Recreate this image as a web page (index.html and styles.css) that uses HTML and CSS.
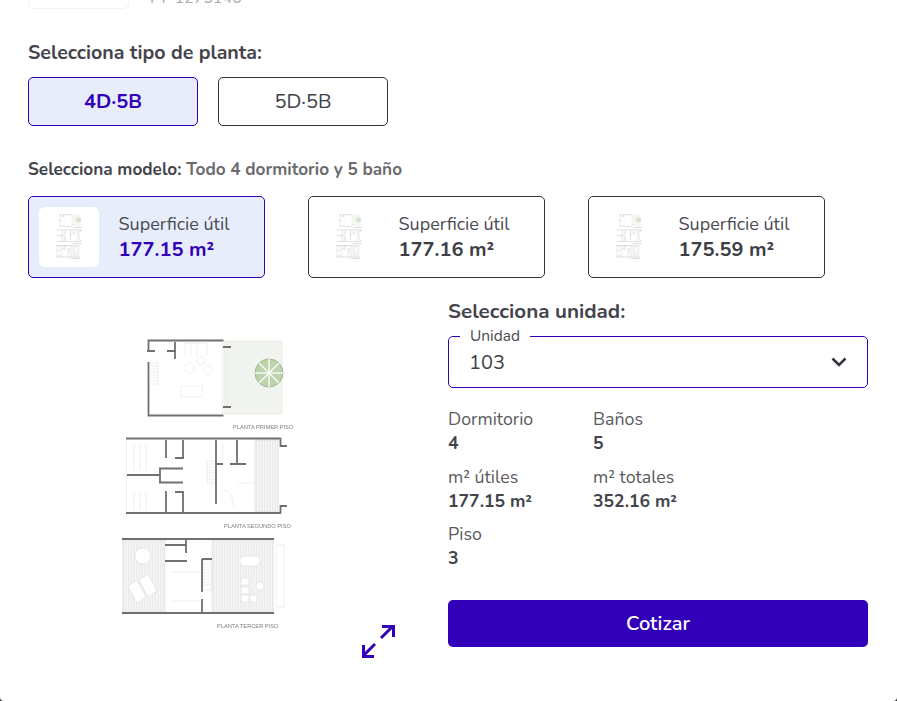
FILE: index.html
```html
<!DOCTYPE html>
<html lang="es">
<head>
<meta charset="utf-8">
<title>Selecciona planta</title>
<link rel="stylesheet" href="styles.css">
</head>
<body>
<svg class="defs" width="0" height="0" aria-hidden="true">
  <defs>
    <pattern id="stripes" width="1.600" height="4" patternUnits="userSpaceOnUse">
      <rect class="stripe-bg" width="1.600" height="4"/>
      <rect class="stripe" width=".7" height="4"/>
    </pattern>
  </defs>
  <symbol id="plan" class="plan-symbol" viewBox="112 330 190 308">
    <g class="thin">
      <rect class="terrace" x="224" y="341" width="58" height="73"/>
      <path d="M222.500 341V414M227 349V405"/>
      <path d="M150 363h8M150 366h8M150 369h8M150 372h8M150 375h8M150 378h8M150 381h8M150 384h8M158 362V386"/>
      <rect x="181" y="386" width="21" height="11"/>
      <path d="M185 343v13M191 343v13M197 343v13M185 343h22v13"/>
      <path d="M189 361l-6 7 6 7 6-7zM208 365l-5 5 5 5 5-5z"/>
      <circle cx="201" cy="361" r="4"/>
    </g>
    <g class="tree">
      <circle cx="269" cy="373" r="14"/>
      <path d="M269 359v28M255 373h28M259 363l20 20M279 363l-20 20"/>
    </g>
    <path class="wall" d="M148.500 352V340.500H223.500M148.500 362V415.500H223.500M147 351H155M167 351H176M175 342V359M223 347H231M223 407H231"/>
    <text class="cap" x="233" y="429">PLANTA PRIMER PISO</text>

    <g class="thin">
      <rect class="deck" x="255" y="440" width="23" height="72"/>
      <path d="M126.500 440V512M207 461h9v23h-9zM207 464h9M207 467h9M207 470h9M207 473h9M207 476h9M207 479h9M207 482h9"/>
      <path d="M134 444v26M140 444v26M146 444v26M134 492v18M140 492v18M146 492v18M238 483h16M223 444v15M223 490q10 0 10 16"/>
    </g>
    <path class="wall" d="M126 438.500H281M126 513H281M280.500 438V447M280 446H287M280.500 505V513M280 506H287M166 440V458M183 440V458M175 458H184M127 475H160M160 468V483M159 468.500H183M159 482.500H183M166 491V512M183 491V512M175 492H184M216 440V504M216 464H223M237 440V465M230 464H246"/>
    <text class="cap" x="224" y="528">PLANTA SEGUNDO PISO</text>

    <g class="thin">
      <rect class="deck" x="123" y="540" width="42" height="72"/>
      <rect class="deck" x="212" y="540" width="61" height="72"/>
      <path d="M276 545h8v62h-8z"/>
      <circle class="fur" cx="143" cy="556" r="8"/>
      <path class="fur" d="M128 586l9-6 9 17-9 6zM139 580l9-6 9 17-9 6z"/>
      <rect class="fur" x="240" y="556" width="20" height="10" rx="4"/>
      <rect class="fur" x="241" y="578" width="8" height="7"/>
      <rect class="fur" x="241" y="587" width="8" height="7"/>
      <rect class="fur" x="241" y="595" width="8" height="7"/>
      <rect class="fur" x="250" y="595" width="7" height="7"/>
      <circle class="fur" cx="260" cy="586" r="4"/>
      <path d="M203 561h9v29h-9zM203 564h9M203 567h9M203 570h9M203 573h9M203 576h9M203 579h9M203 582h9M203 585h9M170 572h30M170 601h30"/>
    </g>
    <path class="wall" d="M122 539H274M122 613H274M165 545H187M186 540V553M165 561H187M202 559H212M202 559V592M202 599V612"/>
    <text class="cap" x="217" y="628">PLANTA TERCER PISO</text>
  </symbol>
</svg>

<main class="modal">
  <header class="top">
    <div class="logo-card"></div>
    <span class="code">FT-1275146</span>
  </header>

  <h2 class="title">Selecciona tipo de planta:</h2>
  <div class="types">
    <button class="type active">4D·5B</button>
    <button class="type">5D·5B</button>
  </div>

  <p class="subtitle">Selecciona modelo: <span>Todo 4 dormitorio y 5 baño</span></p>
  <div class="models">
    <div class="model active">
      <div class="thumb"><svg class="thumb-img"><use href="#plan"/></svg></div>
      <div><div class="m-label">Superficie útil</div><div class="m-value">177.15 m²</div></div>
    </div>
    <div class="model">
      <div class="thumb"><svg class="thumb-img"><use href="#plan"/></svg></div>
      <div><div class="m-label">Superficie útil</div><div class="m-value">177.16 m²</div></div>
    </div>
    <div class="model">
      <div class="thumb"><svg class="thumb-img"><use href="#plan"/></svg></div>
      <div><div class="m-label">Superficie útil</div><div class="m-value">175.59 m²</div></div>
    </div>
  </div>

  <section class="detail">
    <div class="plan-box">
      <svg class="plan-img"><use href="#plan"/></svg>
      <svg class="expand" viewBox="0 0 36 36" aria-hidden="true"><path d="M21 15L33 3M22 3.500H33.500V14M15 21L3 33M3.500 22V33.500H14"/></svg>
    </div>
    <div class="unit">
      <h3 class="unit-title">Selecciona unidad:</h3>
      <div class="select">
        <span class="float-label">Unidad</span>
        <span class="select-value">103</span>
        <svg class="chev" viewBox="0 0 16 10" aria-hidden="true"><path d="M1.500 1.500L8 8l6.500-6.500"/></svg>
      </div>
      <dl class="facts">
        <div><dt>Dormitorio</dt><dd>4</dd></div>
        <div><dt>Baños</dt><dd>5</dd></div>
        <div><dt>m² útiles</dt><dd>177.15 m²</dd></div>
        <div><dt>m² totales</dt><dd>352.16 m²</dd></div>
        <div><dt>Piso</dt><dd>3</dd></div>
      </dl>
      <button class="cta">Cotizar</button>
    </div>
  </section>
</main>
</body>
</html>
```
FILE: styles.css
```css
* { box-sizing: border-box; }
html, body { margin: 0; height: 100%; background: #3a3a3a; overflow: hidden; }
body { font-family: "Nunito", "Lato", "Open Sans", sans-serif; color: #3e3e46; }
.defs { position: absolute; }
.plan-symbol { overflow: visible; }

.modal {
  height: 701px;
  background: #fff;
  border-radius: 0 0 4px 4px;
  padding: 0 29px 0 28px;
  overflow: hidden;
}

.top { height: 9px; display: flex; align-items: flex-end; overflow: hidden; }
.logo-card { width: 101px; height: 30px; flex: none; border: 1px solid #f3f3f3; border-radius: 5px; }
.code { margin: 0 0 3px 21px; font-size: 16px; line-height: 16px; color: #a8a8a8; }

.title { margin: 31px 0 0; font-size: 19.600px; line-height: 25px; font-weight: 700; color: #44444c; }

.types { display: flex; gap: 20px; margin-top: 12px; }
.type {
  width: 170px; height: 49px; padding: 0;
  background: #fff; border: 1px solid #33333b; border-radius: 5px;
  font: 400 20px "Nunito", "Lato", "Open Sans", sans-serif; color: #3e3e46;
}
.type.active { background: #e8edfb; border-color: #3200b8; color: #3200b8; font-weight: 700; }

.subtitle { margin: 33px 0 0; font-size: 17.200px; line-height: 22px; font-weight: 700; color: #44444c; }
.subtitle span { color: #6b6b6f; }

.models { display: flex; gap: 43px; margin-top: 15px; }
.model {
  width: 237px; height: 82px; padding: 10px;
  display: flex; align-items: center; gap: 19.500px;
  background: #fff; border: 1px solid #33333b; border-radius: 5px;
}
.model.active { background: #e8edfb; border-color: #3200b8; }
.thumb { width: 60px; height: 60px; flex: none; background: #fff; border-radius: 6px; padding: 6px 0; display: flex; justify-content: center; }
.thumb-img { width: 30px; height: 48px; opacity: .75; filter: blur(.2px); overflow: visible; }
.m-label { font-size: 18px; line-height: 25px; color: #4a4a52; }
.m-value { font-size: 20px; line-height: 25px; font-weight: 700; color: #3e3e46; }
.model.active .m-value { color: #3200b8; }

.detail { display: grid; grid-template-columns: 400px 420px; gap: 20px; margin-top: 21px; }
.plan-box { position: relative; height: 380px; }
.plan-img { display: block; position: absolute; left: 84px; top: 31px; width: 190px; height: 308px; filter: blur(.45px); overflow: visible; }
.expand { position: absolute; left: 332px; top: 324px; width: 36px; height: 36px; fill: none; stroke: #3200b8; stroke-width: 3; }

.unit-title { margin: 0; font-size: 20.600px; line-height: 25px; font-weight: 700; color: #44444c; }
.select {
  position: relative; height: 52px; margin-top: 12px; padding: 0 21px;
  display: flex; align-items: center; justify-content: space-between;
  border: 1px solid #3200b8; border-radius: 5px;
}
.float-label { position: absolute; left: 11px; top: -9px; padding: 0 10px; background: #fff; font-size: 15.500px; line-height: 16px; color: #4a4a52; }
.select-value { font-size: 20px; color: #3e3e46; margin-left: -1px; }
.chev { width: 16px; height: 10px; margin-right: -1px; fill: none; stroke: #33333b; stroke-width: 2.500; }

.facts { display: grid; grid-template-columns: 145px 1fr; row-gap: 9.500px; margin: 19px 0 0; }
.facts dt { font-size: 17.800px; line-height: 24px; color: #5a5a60; }
.facts dd { margin: 0; font-size: 17.600px; line-height: 24px; font-weight: 700; color: #44444c; }

.cta {
  display: block; width: 100%; height: 47px; margin-top: 30px; padding: 0;
  background: #3200b8; border: 0; border-radius: 5px;
  font: 600 20px "Nunito", "Lato", "Open Sans", sans-serif; color: #fff;
}

.wall { fill: none; stroke: #707070; stroke-width: 1.800; }
.thin path, .thin rect, .thin circle { fill: none; stroke: #e4e4e4; stroke-width: .6; }
.thin .terrace { fill: #f1f4ee; stroke: #e2e7dd; }
.thin .deck { fill: url(#stripes); stroke: #d8d8d8; }
.thin .fur { fill: #fff; stroke: #dcdcdc; }
.stripe-bg { fill: #f7f7f7; }
.stripe { fill: #e8e8e8; }
.tree circle { fill: #bcd3ad; stroke: #8fae7f; stroke-width: .8; }
.tree path { fill: none; stroke: #f4f8f0; stroke-width: 1.600; }
.cap { font: 5.700px "Liberation Sans", sans-serif; fill: #808080; }
```
